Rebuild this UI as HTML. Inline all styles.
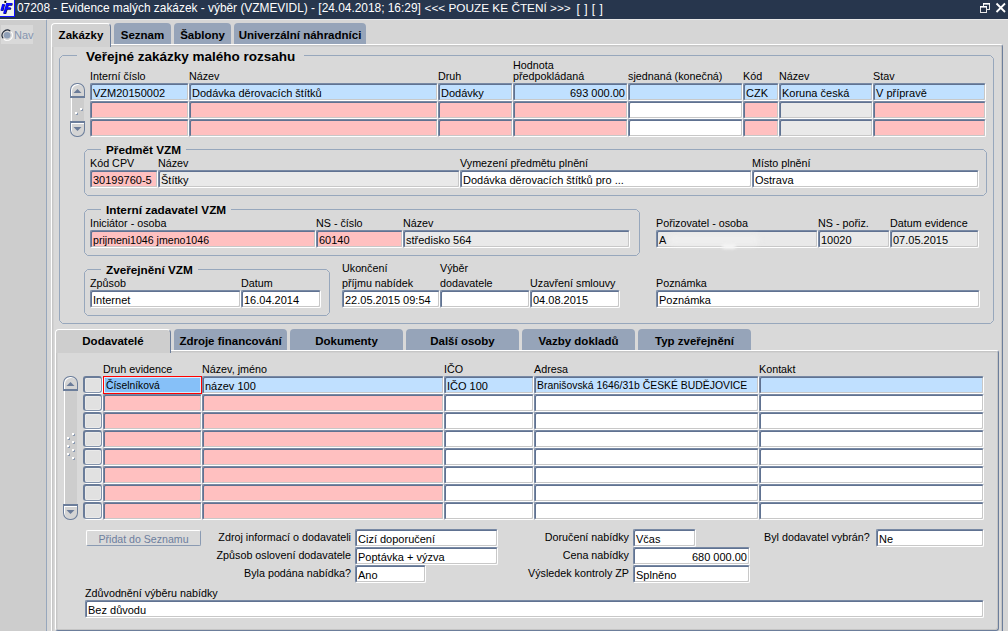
<!DOCTYPE html>
<html><head><meta charset="utf-8"><style>
html,body{margin:0;padding:0;width:1008px;height:631px;overflow:hidden;background:#d6d6d6;}
body{position:relative;font-family:"Liberation Sans", sans-serif;}
div{position:absolute;}
.t{white-space:pre;color:#000;}
.f{box-sizing:border-box;border-style:solid;border-width:1px;border-color:#7889a4 #fff #fff #7889a4;box-shadow:inset 1px 1px 0 #607291, inset -1px -1px 0 #c8c8c8;border-radius:2px;}
.g{box-sizing:border-box;border:1px solid #97a7bc;border-radius:4px;}
.tabI{box-sizing:border-box;background:#96a4b9;border-radius:4px 4px 0 0;}
.tabA{box-sizing:border-box;border-top:1px solid #fff;border-left:1px solid #fff;border-right:1px solid #6c7e9b;border-radius:4px 4px 0 0;}
.sb{box-sizing:border-box;width:15px;background:#d4d4d4;border:1px solid #6c7e9b;box-shadow:inset 1px 1px 0 #fff;}
</style></head><body>
<div style="left:0px;top:0px;width:1008px;height:19px;background:#27364d"></div>
<div style="left:0px;top:19px;width:1008px;height:1px;background:#e8e8e8"></div>
<svg style="position:absolute;left:0;top:0" width="16" height="18" viewBox="0 0 16 18"><rect x="0" y="0" width="15" height="17" fill="#1010ff"/><rect x="0" y="0" width="14" height="16" fill="#f2f2ee"/><g fill="#1a1a40" transform="translate(0.6,0.6)"><polygon points="2.2,4 4.6,4 2.8,10.5 0.4,10.5"/><polygon points="6.3,3 8.8,3 5.6,13.5 3,13.5"/><polygon points="6.3,3 12.3,3 11.6,5.2 5.6,5.2"/><polygon points="5.2,7.3 10.8,7.3 10.2,9.2 4.6,9.2"/></g><g fill="#0a0aff"><polygon points="2.2,4 4.6,4 2.8,10.5 0.4,10.5"/><polygon points="6.3,3 8.8,3 5.6,13.5 3,13.5"/><polygon points="6.3,3 12.3,3 11.6,5.2 5.6,5.2"/><polygon points="5.2,7.3 10.8,7.3 10.2,9.2 4.6,9.2"/></g><circle cx="5.3" cy="1.9" r="1.1" fill="#000"/></svg>
<div class="t" style="left:17px;top:2.9299999999999997px;font-size:11.9px;line-height:11.9px;color:#fff;">07208 - Evidence malých zakázek - výběr (VZMEVIDL) - [24.04.2018; 16:29]</div>
<div class="t" style="left:424.5px;top:3.01px;font-size:11.8px;line-height:11.8px;color:#fff;">&lt;&lt;&lt; POUZE KE ČTENÍ &gt;&gt;&gt;</div>
<div class="t" style="left:576.5px;top:2.84px;font-size:12px;line-height:12px;color:#fff;letter-spacing:0.5px">[ ] [ ]</div>
<svg style="position:absolute;left:976px;top:0px" width="32" height="19" viewBox="0 0 32 19"><g fill="none" stroke="#e8e8e8" stroke-width="1"><rect x="7.5" y="3.5" width="6" height="6"/><rect x="4.5" y="6.5" width="6" height="6" fill="#253248"/></g><rect x="7" y="3" width="7" height="1.6" fill="#fff"/><rect x="4" y="6" width="7" height="1.6" fill="#fff"/><path d="M20.5 3.5 L29 12 M29 3.5 L20.5 12" stroke="#fff" stroke-width="1.8"/></svg>
<div style="left:0px;top:20px;width:46px;height:611px;background:#cdcdcd"></div>
<div style="left:0px;top:19px;width:46px;height:1px;background:#fff"></div>
<div style="left:46px;top:20px;width:1px;height:611px;background:#97a7bc"></div>
<div style="left:1px;top:25px;width:32px;height:19px;background:#d9d9d9"></div>
<svg style="position:absolute;left:0.5px;top:28.5px" width="14" height="14" viewBox="0 0 14 14"><circle cx="6.1" cy="6.2" r="3.3" fill="#8fa0b8"/><path d="M2.04 9.28 A5.2 5.2 0 0 1 9.28 2.04" fill="none" stroke="#1e2838" stroke-width="1.1"/><path d="M10.28 2.96 A5.2 5.2 0 0 1 2.96 10.28" fill="none" stroke="#fff" stroke-width="1.1"/></svg>
<div class="t" style="left:14px;top:29.689999999999998px;font-size:11px;line-height:11px;color:#8595b0;">Nav</div>
<div style="left:47px;top:20px;width:961px;height:611px;background:#d6d6d6"></div>
<div style="left:51px;top:44px;width:952px;height:600px;box-sizing:border-box;background:#d9d9d9;border-top:1px solid #fff;border-left:1px solid #fff;border-right:1px solid #6c7e9b;box-shadow:inset -1px 0 0 #c4c4c4, inset 1px 1px 0 #c6c6c6, inset 2px 2px 0 #d1d1d1;border-top-right-radius:3px"></div>
<div class="tabA" style="left:51px;top:23px;width:60px;height:24px;background:#d1d1d1"></div>
<div class="t" style="left:51px;top:28px;width:60px;text-align:center;font-size:11.5px;line-height:14px;font-weight:bold">Zakázky</div>
<div class="tabI" style="left:114px;top:23px;width:57px;height:21px"></div>
<div class="t" style="left:114px;top:28px;width:57px;text-align:center;font-size:11.5px;line-height:14px;font-weight:bold">Seznam</div>
<div class="tabI" style="left:174px;top:23px;width:57px;height:21px"></div>
<div class="t" style="left:174px;top:28px;width:57px;text-align:center;font-size:11.5px;line-height:14px;font-weight:bold">Šablony</div>
<div class="tabI" style="left:234px;top:23px;width:132px;height:21px"></div>
<div class="t" style="left:234px;top:28px;width:132px;text-align:center;font-size:11.5px;line-height:14px;font-weight:bold">Univerzální náhradníci</div>
<svg style="position:absolute;left:59px;top:55px" width="935" height="269"><path d="M0.5 3.5 L3.5 0.5 H931.5 L934.5 3.5 V265.5 L931.5 268.5 H3.5 L0.5 265.5 Z" fill="none" stroke="#97a7bc" stroke-width="1"/></svg>
<div class="t" style="left:77px;top:49.57px;font-size:13.5px;line-height:13.5px;font-weight:bold;padding:0 9px;background:#d9d9d9">Veřejné zakázky malého rozsahu</div>
<div class="t" style="left:90px;top:70.9px;font-size:10.75px;line-height:10.75px;color:#000;">Interní číslo</div>
<div class="t" style="left:189px;top:70.9px;font-size:10.75px;line-height:10.75px;color:#000;">Název</div>
<div class="t" style="left:438px;top:70.9px;font-size:10.75px;line-height:10.75px;color:#000;">Druh</div>
<div class="t" style="left:513px;top:70.9px;font-size:10.75px;line-height:10.75px;color:#000;">předpokládaná</div>
<div class="t" style="left:628px;top:70.9px;font-size:10.75px;line-height:10.75px;color:#000;">sjednaná (konečná)</div>
<div class="t" style="left:743px;top:70.9px;font-size:10.75px;line-height:10.75px;color:#000;">Kód</div>
<div class="t" style="left:779px;top:70.9px;font-size:10.75px;line-height:10.75px;color:#000;">Název</div>
<div class="t" style="left:873px;top:70.9px;font-size:10.75px;line-height:10.75px;color:#000;">Stav</div>
<div class="t" style="left:513px;top:59.9px;font-size:10.75px;line-height:10.75px;color:#000;">Hodnota</div>
<div class="f" style="left:90px;top:83px;width:99px;height:18px;background:#c0e0ff"></div>
<div class="t" style="left:93px;top:87.69px;font-size:11px;line-height:11px;color:#000;">VZM20150002</div>
<div class="f" style="left:189px;top:83px;width:249px;height:18px;background:#c0e0ff"></div>
<div class="t" style="left:192px;top:87.69px;font-size:11px;line-height:11px;color:#000;">Dodávka děrovacích štítků</div>
<div class="f" style="left:438px;top:83px;width:75px;height:18px;background:#c0e0ff"></div>
<div class="t" style="left:441px;top:87.69px;font-size:11px;line-height:11px;color:#000;">Dodávky</div>
<div class="f" style="left:513px;top:83px;width:115px;height:18px;background:#c0e0ff"></div>
<div class="t" style="left:513px;top:87.69px;font-size:11px;line-height:11px;color:#000;width:112px;text-align:right;">693 000.00</div>
<div class="f" style="left:628px;top:83px;width:115px;height:18px;background:#c0e0ff"></div>
<div class="f" style="left:743px;top:83px;width:36px;height:18px;background:#c0e0ff"></div>
<div class="t" style="left:746px;top:87.69px;font-size:11px;line-height:11px;color:#000;">CZK</div>
<div class="f" style="left:779px;top:83px;width:94px;height:18px;background:#c0e0ff"></div>
<div class="t" style="left:782px;top:87.69px;font-size:11px;line-height:11px;color:#000;">Koruna česká</div>
<div class="f" style="left:873px;top:83px;width:113px;height:18px;background:#c0e0ff"></div>
<div class="t" style="left:876px;top:87.69px;font-size:11px;line-height:11px;color:#000;">V přípravě</div>
<div class="f" style="left:90px;top:101px;width:99px;height:18px;background:#ffc0c0"></div>
<div class="f" style="left:189px;top:101px;width:249px;height:18px;background:#ffc0c0"></div>
<div class="f" style="left:438px;top:101px;width:75px;height:18px;background:#ffc0c0"></div>
<div class="f" style="left:513px;top:101px;width:115px;height:18px;background:#ffc0c0"></div>
<div class="f" style="left:628px;top:101px;width:115px;height:18px;background:#ffffff"></div>
<div class="f" style="left:743px;top:101px;width:36px;height:18px;background:#ffc0c0"></div>
<div class="f" style="left:779px;top:101px;width:94px;height:18px;background:#e9e9e9"></div>
<div class="f" style="left:873px;top:101px;width:113px;height:18px;background:#ffc0c0"></div>
<div class="f" style="left:90px;top:119px;width:99px;height:18px;background:#ffc0c0"></div>
<div class="f" style="left:189px;top:119px;width:249px;height:18px;background:#ffc0c0"></div>
<div class="f" style="left:438px;top:119px;width:75px;height:18px;background:#ffc0c0"></div>
<div class="f" style="left:513px;top:119px;width:115px;height:18px;background:#ffc0c0"></div>
<div class="f" style="left:628px;top:119px;width:115px;height:18px;background:#ffffff"></div>
<div class="f" style="left:743px;top:119px;width:36px;height:18px;background:#ffc0c0"></div>
<div class="f" style="left:779px;top:119px;width:94px;height:18px;background:#e9e9e9"></div>
<div class="f" style="left:873px;top:119px;width:113px;height:18px;background:#ffc0c0"></div>
<div style="left:71px;top:97px;width:13px;height:26px;background:#cdcdcd;box-sizing:border-box;border-left:1px solid #fff"></div>
<div class="sb" style="left:70px;top:83px;height:15px;border-radius:7px 7px 0 0;border-bottom-width:2px"></div>
<svg style="position:absolute;left:70px;top:83px" width="15" height="15"><path d="M3.5 10 L7.5 6 L11.5 10 Z" fill="#6a7b98"/></svg>
<div class="sb" style="left:70px;top:121px;height:16px;border-radius:0 0 7px 7px;border-top-width:2px"></div>
<svg style="position:absolute;left:70px;top:121px" width="15" height="16"><path d="M3.5 6 L7.5 10 L11.5 6 Z" fill="#6a7b98"/></svg>
<div style="left:80px;top:108px;width:2px;height:2px;background:#fff;box-shadow:1px 1px 0 #8a9ab2"></div>
<div style="left:75px;top:112px;width:2px;height:2px;background:#fff;box-shadow:1px 1px 0 #8a9ab2"></div>
<svg style="position:absolute;left:84px;top:149px" width="903" height="47"><path d="M0.5 3.5 L3.5 0.5 H899.5 L902.5 3.5 V43.5 L899.5 46.5 H3.5 L0.5 43.5 Z" fill="none" stroke="#97a7bc" stroke-width="1"/></svg>
<div class="t" style="left:101px;top:144.05px;font-size:11.75px;line-height:11.75px;font-weight:bold;padding:0 5px;background:#d9d9d9">Předmět VZM</div>
<div class="t" style="left:90px;top:157.9px;font-size:10.75px;line-height:10.75px;color:#000;">Kód CPV</div>
<div class="t" style="left:158px;top:157.9px;font-size:10.75px;line-height:10.75px;color:#000;">Název</div>
<div class="t" style="left:460px;top:157.9px;font-size:10.75px;line-height:10.75px;color:#000;">Vymezení předmětu plnění</div>
<div class="t" style="left:752px;top:157.9px;font-size:10.75px;line-height:10.75px;color:#000;">Místo plnění</div>
<div class="f" style="left:90px;top:170px;width:68px;height:18px;background:#ffc0c0"></div>
<div class="t" style="left:93px;top:174.69px;font-size:11px;line-height:11px;color:#000;">30199760-5</div>
<div class="f" style="left:158px;top:170px;width:302px;height:18px;background:#e9e9e9"></div>
<div class="t" style="left:161px;top:174.69px;font-size:11px;line-height:11px;color:#000;">Štítky</div>
<div class="f" style="left:460px;top:170px;width:292px;height:18px;background:#ffffff"></div>
<div class="t" style="left:463px;top:174.69px;font-size:11px;line-height:11px;color:#000;">Dodávka děrovacích štítků pro ...</div>
<div class="f" style="left:752px;top:170px;width:227px;height:18px;background:#ffffff"></div>
<div class="t" style="left:755px;top:174.69px;font-size:11px;line-height:11px;color:#000;">Ostrava</div>
<svg style="position:absolute;left:84px;top:209px" width="556" height="47"><path d="M0.5 3.5 L3.5 0.5 H552.5 L555.5 3.5 V43.5 L552.5 46.5 H3.5 L0.5 43.5 Z" fill="none" stroke="#97a7bc" stroke-width="1"/></svg>
<div class="t" style="left:101px;top:204.05px;font-size:11.75px;line-height:11.75px;font-weight:bold;padding:0 5px;background:#d9d9d9">Interní zadavatel VZM</div>
<div class="t" style="left:90px;top:217.9px;font-size:10.75px;line-height:10.75px;color:#000;">Iniciátor - osoba</div>
<div class="t" style="left:316px;top:217.9px;font-size:10.75px;line-height:10.75px;color:#000;">NS - číslo</div>
<div class="t" style="left:403px;top:217.9px;font-size:10.75px;line-height:10.75px;color:#000;">Název</div>
<div class="f" style="left:90px;top:230px;width:226px;height:18px;background:#ffc0c0"></div>
<div class="t" style="left:93px;top:235.03px;font-size:10.6px;line-height:10.6px;color:#000;">prijmeni1046 jmeno1046</div>
<div class="f" style="left:316px;top:230px;width:87px;height:18px;background:#ffc0c0"></div>
<div class="t" style="left:319px;top:234.69px;font-size:11px;line-height:11px;color:#000;">60140</div>
<div class="f" style="left:403px;top:230px;width:227px;height:18px;background:#e9e9e9"></div>
<div class="t" style="left:406px;top:234.69px;font-size:11px;line-height:11px;color:#000;">středisko 564</div>
<div class="t" style="left:656px;top:217.9px;font-size:10.75px;line-height:10.75px;color:#000;">Pořizovatel - osoba</div>
<div class="t" style="left:818px;top:217.9px;font-size:10.75px;line-height:10.75px;color:#000;">NS - pořiz.</div>
<div class="t" style="left:890px;top:217.9px;font-size:10.75px;line-height:10.75px;color:#000;">Datum evidence</div>
<div class="f" style="left:656px;top:230px;width:162px;height:18px;background:#e9e9e9"></div>
<div class="t" style="left:659px;top:234.69px;font-size:11px;line-height:11px;color:#000;">A</div>
<div style="left:668px;top:235px;width:92px;height:10px;background:#eeeeee;filter:blur(2.5px);border-radius:5px"></div>
<div style="left:722px;top:244px;width:14px;height:5px;background:#f4f4f4;filter:blur(1.5px);border-radius:3px"></div>
<div class="f" style="left:818px;top:230px;width:72px;height:18px;background:#e9e9e9"></div>
<div class="t" style="left:821px;top:234.69px;font-size:11px;line-height:11px;color:#000;">10020</div>
<div class="f" style="left:890px;top:230px;width:89px;height:18px;background:#e9e9e9"></div>
<div class="t" style="left:893px;top:234.69px;font-size:11px;line-height:11px;color:#000;">07.05.2015</div>
<svg style="position:absolute;left:84px;top:269px" width="246" height="47"><path d="M0.5 3.5 L3.5 0.5 H242.5 L245.5 3.5 V43.5 L242.5 46.5 H3.5 L0.5 43.5 Z" fill="none" stroke="#97a7bc" stroke-width="1"/></svg>
<div class="t" style="left:101px;top:264.05px;font-size:11.75px;line-height:11.75px;font-weight:bold;padding:0 5px;background:#d9d9d9">Zveřejnění VZM</div>
<div class="t" style="left:90px;top:277.9px;font-size:10.75px;line-height:10.75px;color:#000;">Způsob</div>
<div class="t" style="left:241px;top:277.9px;font-size:10.75px;line-height:10.75px;color:#000;">Datum</div>
<div class="f" style="left:90px;top:290px;width:151px;height:18px;background:#ffffff"></div>
<div class="t" style="left:93px;top:294.69px;font-size:11px;line-height:11px;color:#000;">Internet</div>
<div class="f" style="left:241px;top:290px;width:80px;height:18px;background:#ffffff"></div>
<div class="t" style="left:244px;top:294.69px;font-size:11px;line-height:11px;color:#000;">16.04.2014</div>
<div class="t" style="left:342px;top:262.9px;font-size:10.75px;line-height:10.75px;color:#000;">Ukončení</div>
<div class="t" style="left:342px;top:277.9px;font-size:10.75px;line-height:10.75px;color:#000;">příjmu nabídek</div>
<div class="t" style="left:440px;top:262.9px;font-size:10.75px;line-height:10.75px;color:#000;">Výběr</div>
<div class="t" style="left:440px;top:277.9px;font-size:10.75px;line-height:10.75px;color:#000;">dodavatele</div>
<div class="t" style="left:530px;top:277.9px;font-size:10.75px;line-height:10.75px;color:#000;">Uzavření smlouvy</div>
<div class="t" style="left:656px;top:277.9px;font-size:10.75px;line-height:10.75px;color:#000;">Poznámka</div>
<div class="f" style="left:342px;top:290px;width:98px;height:18px;background:#ffffff"></div>
<div class="t" style="left:345px;top:294.69px;font-size:11px;line-height:11px;color:#000;">22.05.2015 09:54</div>
<div class="f" style="left:440px;top:290px;width:90px;height:18px;background:#ffffff"></div>
<div class="f" style="left:530px;top:290px;width:90px;height:18px;background:#ffffff"></div>
<div class="t" style="left:533px;top:294.69px;font-size:11px;line-height:11px;color:#000;">04.08.2015</div>
<div class="f" style="left:656px;top:290px;width:324px;height:18px;background:#ffffff"></div>
<div class="t" style="left:659px;top:294.69px;font-size:11px;line-height:11px;color:#000;">Poznámka</div>
<div style="left:55px;top:350px;width:944px;height:281px;box-sizing:border-box;background:#d9d9d9;border-top:1px solid #fff;border-left:1px solid #fff;border-right:1px solid #6c7e9b;border-bottom:1px solid #6c7e9b;box-shadow:inset -1px -1px 0 #c4c4c4, inset 1px 1px 0 #c6c6c6, inset 2px 2px 0 #d1d1d1;border-radius:0 3px 3px 3px"></div>
<div class="tabA" style="left:55px;top:329px;width:116px;height:24px;background:#cecece"></div>
<div class="t" style="left:55px;top:334px;width:116px;text-align:center;font-size:11.5px;line-height:14px;font-weight:bold">Dodavatelé</div>
<div class="tabI" style="left:174px;top:329px;width:113px;height:21px"></div>
<div class="t" style="left:174px;top:334px;width:113px;text-align:center;font-size:11.5px;line-height:14px;font-weight:bold">Zdroje financování</div>
<div class="tabI" style="left:290px;top:329px;width:113px;height:21px"></div>
<div class="t" style="left:290px;top:334px;width:113px;text-align:center;font-size:11.5px;line-height:14px;font-weight:bold">Dokumenty</div>
<div class="tabI" style="left:406px;top:329px;width:113px;height:21px"></div>
<div class="t" style="left:406px;top:334px;width:113px;text-align:center;font-size:11.5px;line-height:14px;font-weight:bold">Další osoby</div>
<div class="tabI" style="left:522px;top:329px;width:113px;height:21px"></div>
<div class="t" style="left:522px;top:334px;width:113px;text-align:center;font-size:11.5px;line-height:14px;font-weight:bold">Vazby dokladů</div>
<div class="tabI" style="left:638px;top:329px;width:113px;height:21px"></div>
<div class="t" style="left:638px;top:334px;width:113px;text-align:center;font-size:11.5px;line-height:14px;font-weight:bold">Typ zveřejnění</div>
<div class="t" style="left:103px;top:363.9px;font-size:10.75px;line-height:10.75px;color:#000;">Druh evidence</div>
<div class="t" style="left:202px;top:363.9px;font-size:10.75px;line-height:10.75px;color:#000;">Název, jméno</div>
<div class="t" style="left:444px;top:363.9px;font-size:10.75px;line-height:10.75px;color:#000;">IČO</div>
<div class="t" style="left:534px;top:363.9px;font-size:10.75px;line-height:10.75px;color:#000;">Adresa</div>
<div class="t" style="left:759px;top:363.9px;font-size:10.75px;line-height:10.75px;color:#000;">Kontakt</div>
<div style="left:84px;top:377px;width:19px;height:17px;background:#fff;border-radius:3px"></div>
<div style="left:83px;top:376px;width:19px;height:17px;box-sizing:border-box;background:#e1e1e1;border-style:solid;border-width:2px 1px 1px 2px;border-color:#6a7c99 #8393ab #8393ab #6a7c99;border-radius:3px;box-shadow:inset 0 0 0 1px #eaeaea"></div>
<div class="f" style="left:103px;top:376px;width:99px;height:18px;background:#86c0f8"></div>
<div style="left:103px;top:376px;width:99px;height:18px;box-sizing:border-box;border:1px solid #ff0000;box-shadow:inset 0 0 0 1px #d8ecfa"></div>
<div class="t" style="left:106px;top:381.28px;font-size:10.3px;line-height:10.3px;color:#000;">Číselníková</div>
<div class="f" style="left:202px;top:376px;width:242px;height:18px;background:#c0e0ff"></div>
<div class="t" style="left:205px;top:380.69px;font-size:11px;line-height:11px;color:#000;">název 100</div>
<div class="f" style="left:444px;top:376px;width:90px;height:18px;background:#c0e0ff"></div>
<div class="t" style="left:447px;top:380.69px;font-size:11px;line-height:11px;color:#000;">IČO 100</div>
<div class="f" style="left:534px;top:376px;width:225px;height:18px;background:#c0e0ff"></div>
<div class="t" style="left:537px;top:381.2px;font-size:10.4px;line-height:10.4px;color:#000;">Branišovská 1646/31b ČESKÉ BUDĚJOVICE</div>
<div class="f" style="left:759px;top:376px;width:225px;height:18px;background:#c0e0ff"></div>
<div style="left:84px;top:395px;width:19px;height:17px;background:#fff;border-radius:3px"></div>
<div style="left:83px;top:394px;width:19px;height:17px;box-sizing:border-box;background:#e1e1e1;border-style:solid;border-width:2px 1px 1px 2px;border-color:#6a7c99 #8393ab #8393ab #6a7c99;border-radius:3px;box-shadow:inset 0 0 0 1px #eaeaea"></div>
<div class="f" style="left:103px;top:394px;width:99px;height:18px;background:#ffc0c0"></div>
<div class="f" style="left:202px;top:394px;width:242px;height:18px;background:#ffc0c0"></div>
<div class="f" style="left:444px;top:394px;width:90px;height:18px;background:#ffffff"></div>
<div class="f" style="left:534px;top:394px;width:225px;height:18px;background:#ffffff"></div>
<div class="f" style="left:759px;top:394px;width:225px;height:18px;background:#ffffff"></div>
<div style="left:84px;top:413px;width:19px;height:17px;background:#fff;border-radius:3px"></div>
<div style="left:83px;top:412px;width:19px;height:17px;box-sizing:border-box;background:#e1e1e1;border-style:solid;border-width:2px 1px 1px 2px;border-color:#6a7c99 #8393ab #8393ab #6a7c99;border-radius:3px;box-shadow:inset 0 0 0 1px #eaeaea"></div>
<div class="f" style="left:103px;top:412px;width:99px;height:18px;background:#ffc0c0"></div>
<div class="f" style="left:202px;top:412px;width:242px;height:18px;background:#ffc0c0"></div>
<div class="f" style="left:444px;top:412px;width:90px;height:18px;background:#ffffff"></div>
<div class="f" style="left:534px;top:412px;width:225px;height:18px;background:#ffffff"></div>
<div class="f" style="left:759px;top:412px;width:225px;height:18px;background:#ffffff"></div>
<div style="left:84px;top:431px;width:19px;height:17px;background:#fff;border-radius:3px"></div>
<div style="left:83px;top:430px;width:19px;height:17px;box-sizing:border-box;background:#e1e1e1;border-style:solid;border-width:2px 1px 1px 2px;border-color:#6a7c99 #8393ab #8393ab #6a7c99;border-radius:3px;box-shadow:inset 0 0 0 1px #eaeaea"></div>
<div class="f" style="left:103px;top:430px;width:99px;height:18px;background:#ffc0c0"></div>
<div class="f" style="left:202px;top:430px;width:242px;height:18px;background:#ffc0c0"></div>
<div class="f" style="left:444px;top:430px;width:90px;height:18px;background:#ffffff"></div>
<div class="f" style="left:534px;top:430px;width:225px;height:18px;background:#ffffff"></div>
<div class="f" style="left:759px;top:430px;width:225px;height:18px;background:#ffffff"></div>
<div style="left:84px;top:449px;width:19px;height:17px;background:#fff;border-radius:3px"></div>
<div style="left:83px;top:448px;width:19px;height:17px;box-sizing:border-box;background:#e1e1e1;border-style:solid;border-width:2px 1px 1px 2px;border-color:#6a7c99 #8393ab #8393ab #6a7c99;border-radius:3px;box-shadow:inset 0 0 0 1px #eaeaea"></div>
<div class="f" style="left:103px;top:448px;width:99px;height:18px;background:#ffc0c0"></div>
<div class="f" style="left:202px;top:448px;width:242px;height:18px;background:#ffc0c0"></div>
<div class="f" style="left:444px;top:448px;width:90px;height:18px;background:#ffffff"></div>
<div class="f" style="left:534px;top:448px;width:225px;height:18px;background:#ffffff"></div>
<div class="f" style="left:759px;top:448px;width:225px;height:18px;background:#ffffff"></div>
<div style="left:84px;top:467px;width:19px;height:17px;background:#fff;border-radius:3px"></div>
<div style="left:83px;top:466px;width:19px;height:17px;box-sizing:border-box;background:#e1e1e1;border-style:solid;border-width:2px 1px 1px 2px;border-color:#6a7c99 #8393ab #8393ab #6a7c99;border-radius:3px;box-shadow:inset 0 0 0 1px #eaeaea"></div>
<div class="f" style="left:103px;top:466px;width:99px;height:18px;background:#ffc0c0"></div>
<div class="f" style="left:202px;top:466px;width:242px;height:18px;background:#ffc0c0"></div>
<div class="f" style="left:444px;top:466px;width:90px;height:18px;background:#ffffff"></div>
<div class="f" style="left:534px;top:466px;width:225px;height:18px;background:#ffffff"></div>
<div class="f" style="left:759px;top:466px;width:225px;height:18px;background:#ffffff"></div>
<div style="left:84px;top:485px;width:19px;height:17px;background:#fff;border-radius:3px"></div>
<div style="left:83px;top:484px;width:19px;height:17px;box-sizing:border-box;background:#e1e1e1;border-style:solid;border-width:2px 1px 1px 2px;border-color:#6a7c99 #8393ab #8393ab #6a7c99;border-radius:3px;box-shadow:inset 0 0 0 1px #eaeaea"></div>
<div class="f" style="left:103px;top:484px;width:99px;height:18px;background:#ffc0c0"></div>
<div class="f" style="left:202px;top:484px;width:242px;height:18px;background:#ffc0c0"></div>
<div class="f" style="left:444px;top:484px;width:90px;height:18px;background:#ffffff"></div>
<div class="f" style="left:534px;top:484px;width:225px;height:18px;background:#ffffff"></div>
<div class="f" style="left:759px;top:484px;width:225px;height:18px;background:#ffffff"></div>
<div style="left:84px;top:503px;width:19px;height:17px;background:#fff;border-radius:3px"></div>
<div style="left:83px;top:502px;width:19px;height:17px;box-sizing:border-box;background:#e1e1e1;border-style:solid;border-width:2px 1px 1px 2px;border-color:#6a7c99 #8393ab #8393ab #6a7c99;border-radius:3px;box-shadow:inset 0 0 0 1px #eaeaea"></div>
<div class="f" style="left:103px;top:502px;width:99px;height:18px;background:#ffc0c0"></div>
<div class="f" style="left:202px;top:502px;width:242px;height:18px;background:#ffc0c0"></div>
<div class="f" style="left:444px;top:502px;width:90px;height:18px;background:#ffffff"></div>
<div class="f" style="left:534px;top:502px;width:225px;height:18px;background:#ffffff"></div>
<div class="f" style="left:759px;top:502px;width:225px;height:18px;background:#ffffff"></div>
<div style="left:64px;top:390px;width:13px;height:116px;background:#cdcdcd;box-sizing:border-box;border-left:1px solid #fff"></div>
<div class="sb" style="left:63px;top:376px;height:15px;border-radius:7px 7px 0 0;border-bottom-width:2px"></div>
<svg style="position:absolute;left:63px;top:376px" width="15" height="15"><path d="M3.5 10 L7.5 6 L11.5 10 Z" fill="#6a7b98"/></svg>
<div class="sb" style="left:63px;top:504px;height:16px;border-radius:0 0 7px 7px;border-top-width:2px"></div>
<svg style="position:absolute;left:63px;top:504px" width="15" height="16"><path d="M3.5 6 L7.5 10 L11.5 6 Z" fill="#6a7b98"/></svg>
<div style="left:72px;top:433px;width:2px;height:2px;background:#fff;box-shadow:1px 1px 0 #8a9ab2"></div>
<div style="left:67px;top:437px;width:2px;height:2px;background:#fff;box-shadow:1px 1px 0 #8a9ab2"></div>
<div style="left:72px;top:441px;width:2px;height:2px;background:#fff;box-shadow:1px 1px 0 #8a9ab2"></div>
<div style="left:67px;top:445px;width:2px;height:2px;background:#fff;box-shadow:1px 1px 0 #8a9ab2"></div>
<div style="left:72px;top:449px;width:2px;height:2px;background:#fff;box-shadow:1px 1px 0 #8a9ab2"></div>
<div style="left:67px;top:453px;width:2px;height:2px;background:#fff;box-shadow:1px 1px 0 #8a9ab2"></div>
<div style="left:72px;top:457px;width:2px;height:2px;background:#fff;box-shadow:1px 1px 0 #8a9ab2"></div>
<div style="left:86px;top:530px;width:115px;height:16px;box-sizing:border-box;border:1px solid;border-color:#fff #8a9ab2 #8a9ab2 #fff;border-radius:2px;background:#d9d9d9"></div>
<div class="t" style="left:86px;top:534.03px;font-size:10.6px;line-height:10.6px;color:#6d7e9e;width:115px;text-align:center;">Přidat do Seznamu</div>
<div class="t" style="left:51px;top:531.9px;font-size:10.75px;line-height:10.75px;color:#000;width:300px;text-align:right;">Zdroj informací o dodavateli</div>
<div class="f" style="left:355px;top:529px;width:143px;height:18px;background:#ffffff"></div>
<div class="t" style="left:358px;top:533.69px;font-size:11px;line-height:11px;color:#000;">Cizí doporučení</div>
<div class="t" style="left:51px;top:549.9px;font-size:10.75px;line-height:10.75px;color:#000;width:300px;text-align:right;">Způsob oslovení dodavatele</div>
<div class="f" style="left:355px;top:547px;width:143px;height:18px;background:#ffffff"></div>
<div class="t" style="left:358px;top:551.69px;font-size:11px;line-height:11px;color:#000;">Poptávka + výzva</div>
<div class="t" style="left:51px;top:567.9px;font-size:10.75px;line-height:10.75px;color:#000;width:300px;text-align:right;">Byla podána nabídka?</div>
<div class="f" style="left:355px;top:565px;width:71px;height:18px;background:#ffffff"></div>
<div class="t" style="left:358px;top:569.69px;font-size:11px;line-height:11px;color:#000;">Ano</div>
<div class="t" style="left:329px;top:531.9px;font-size:10.75px;line-height:10.75px;color:#000;width:300px;text-align:right;">Doručení nabídky</div>
<div class="f" style="left:633px;top:529px;width:63px;height:18px;background:#ffffff"></div>
<div class="t" style="left:636px;top:533.69px;font-size:11px;line-height:11px;color:#000;">Včas</div>
<div class="t" style="left:329px;top:549.9px;font-size:10.75px;line-height:10.75px;color:#000;width:300px;text-align:right;">Cena nabídky</div>
<div class="f" style="left:633px;top:547px;width:117px;height:18px;background:#ffffff"></div>
<div class="t" style="left:633px;top:551.69px;font-size:11px;line-height:11px;color:#000;width:114px;text-align:right;">680 000.00</div>
<div class="t" style="left:329px;top:567.9px;font-size:10.75px;line-height:10.75px;color:#000;width:300px;text-align:right;">Výsledek kontroly ZP</div>
<div class="f" style="left:633px;top:565px;width:117px;height:18px;background:#ffffff"></div>
<div class="t" style="left:636px;top:569.69px;font-size:11px;line-height:11px;color:#000;">Splněno</div>
<div class="t" style="left:764px;top:531.9px;font-size:10.75px;line-height:10.75px;color:#000;">Byl dodavatel vybrán?</div>
<div class="f" style="left:876px;top:529px;width:108px;height:18px;background:#ffffff"></div>
<div class="t" style="left:879px;top:533.69px;font-size:11px;line-height:11px;color:#000;">Ne</div>
<div class="t" style="left:85px;top:587.9px;font-size:10.75px;line-height:10.75px;color:#000;">Zdůvodnění výběru nabídky</div>
<div class="f" style="left:85px;top:600px;width:899px;height:18px;background:#ffffff"></div>
<div class="t" style="left:88px;top:604.69px;font-size:11px;line-height:11px;color:#000;">Bez důvodu</div>
</body></html>
